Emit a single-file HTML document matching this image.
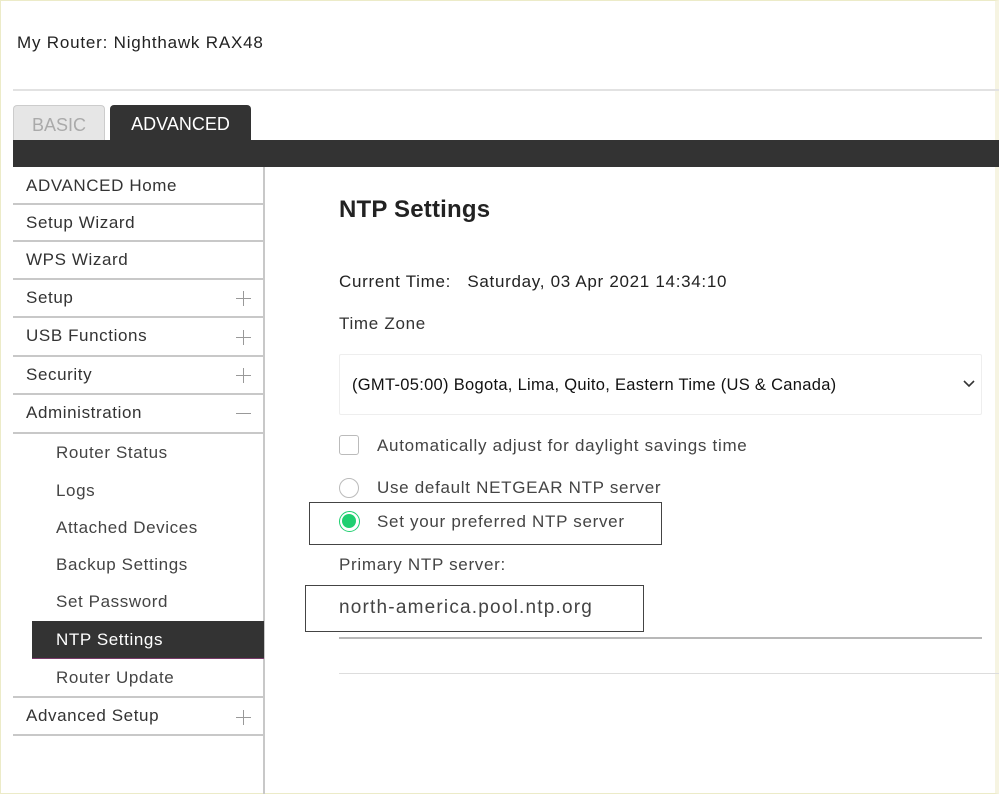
<!DOCTYPE html>
<html><head><style>
*{margin:0;padding:0;box-sizing:border-box}
body{width:999px;height:794px;position:relative;background:#fff;font-family:"Liberation Sans",sans-serif;color:#333;overflow:hidden}
.a{position:absolute;white-space:nowrap}
.frame{position:absolute;left:0;top:0;width:999px;height:794px;border:1px solid #ecebc8;border-right:4px solid #f6f4e2}
.nav{font-size:17px;color:#333;left:26px;letter-spacing:0.6px}
.sub{font-size:17px;color:#444;left:56px;letter-spacing:0.6px}
.sep{position:absolute;left:13px;width:250px;height:2px;background:#c8c8c8}
.plus{position:absolute;left:236px;width:15px;height:15px}
.plus:before{content:"";position:absolute;left:0;top:7px;width:15px;height:1px;background:#999}
.plus.p:after{content:"";position:absolute;left:7px;top:0;width:1px;height:15px;background:#999}
.t{font-size:17px;color:#333;letter-spacing:0.7px}
</style></head><body>
<div class="frame"></div>
<div class="a" style="left:17px;top:33px;font-size:17px;color:#222;letter-spacing:0.8px">My Router: Nighthawk RAX48</div>
<div class="a" style="left:13px;top:89px;width:986px;height:2px;background:#e2e2e2"></div>
<div class="a" style="left:13px;top:105px;width:92px;height:36px;background:#e6e6e6;border:1px solid #ccc;border-bottom:none;border-radius:4px 4px 0 0;color:#aaa;font-size:18px;text-align:center;line-height:38px">BASIC</div>
<div class="a" style="left:110px;top:105px;width:141px;height:36px;background:#333;border-radius:4px 4px 0 0;color:#fff;font-size:18px;text-align:center;line-height:38px">ADVANCED</div>
<div class="a" style="left:13px;top:140px;width:986px;height:27px;background:#333"></div>
<div class="a" style="left:263px;top:167px;width:2px;height:627px;background:#c8c8c8"></div>

<div class="a nav" style="top:176px">ADVANCED Home</div>
<div class="sep" style="top:203px"></div>
<div class="a nav" style="top:213px">Setup Wizard</div>
<div class="sep" style="top:240px"></div>
<div class="a nav" style="top:250px">WPS Wizard</div>
<div class="sep" style="top:278px"></div>
<div class="a nav" style="top:288px">Setup</div><div class="plus p" style="top:291px"></div>
<div class="sep" style="top:316px"></div>
<div class="a nav" style="top:326px">USB Functions</div><div class="plus p" style="top:330px"></div>
<div class="sep" style="top:355px"></div>
<div class="a nav" style="top:365px">Security</div><div class="plus p" style="top:368px"></div>
<div class="sep" style="top:393px"></div>
<div class="a nav" style="top:403px">Administration</div><div class="plus" style="top:406px"></div>
<div class="sep" style="top:432px"></div>
<div class="a sub" style="top:443px">Router Status</div>
<div class="a sub" style="top:481px">Logs</div>
<div class="a sub" style="top:518px">Attached Devices</div>
<div class="a sub" style="top:555px">Backup Settings</div>
<div class="a sub" style="top:592px">Set Password</div>
<div class="a" style="left:32px;top:621px;width:232px;height:38px;background:#333;border-bottom:1px solid #7a3a6a"></div>
<div class="a sub" style="top:630px;color:#fff">NTP Settings</div>
<div class="a sub" style="top:668px">Router Update</div>
<div class="sep" style="top:696px"></div>
<div class="a nav" style="top:706px">Advanced Setup</div><div class="plus p" style="top:710px"></div>
<div class="sep" style="top:734px"></div>

<div class="a" style="left:339px;top:196px;font-size:24px;font-weight:bold;color:#222;letter-spacing:0.2px">NTP Settings</div>
<div class="a t" style="left:339px;top:272px;color:#222">Current Time:&nbsp;&nbsp; Saturday, 03 Apr 2021 14:34:10</div>
<div class="a t" style="left:339px;top:314px">Time Zone</div>
<div class="a" style="left:339px;top:354px;width:643px;height:61px;border:1px solid #eee;border-radius:2px"></div>
<div class="a" style="left:352px;top:376px;font-size:16.5px;color:#111;letter-spacing:0.3px">(GMT-05:00) Bogota, Lima, Quito, Eastern Time (US &amp; Canada)</div>
<svg class="a" style="left:963px;top:380px" width="12" height="8"><path d="M1 1 L6 6 L11 1" fill="none" stroke="#333" stroke-width="1.6"/></svg>
<div class="a" style="left:339px;top:435px;width:20px;height:20px;border:1.5px solid #bbb;border-radius:3px"></div>
<div class="a t" style="left:377px;top:436px;color:#444">Automatically adjust for daylight savings time</div>
<div class="a" style="left:339px;top:478px;width:20px;height:20px;border:1.5px solid #bbb;border-radius:50%"></div>
<div class="a t" style="left:377px;top:478px;color:#444">Use default NETGEAR NTP server</div>
<div class="a" style="left:309px;top:502px;width:353px;height:43px;border:1.5px solid #444"></div>
<div class="a" style="left:339px;top:511px;width:21px;height:21px;border:1.5px solid #1fcf70;border-radius:50%;padding:2px"><div style="width:14px;height:14px;border-radius:50%;background:#1fcf70"></div></div>
<div class="a t" style="left:377px;top:512px;color:#444">Set your preferred NTP server</div>
<div class="a t" style="left:339px;top:555px;color:#444">Primary NTP server:</div>
<div class="a" style="left:305px;top:585px;width:339px;height:47px;border:1.5px solid #444"></div>
<div class="a" style="left:339px;top:597px;font-size:19px;color:#444;letter-spacing:1.2px">north-america.pool.ntp.org</div>
<div class="a" style="left:339px;top:637px;width:643px;height:2px;background:#b8b8b8"></div>
<div class="a" style="left:339px;top:673px;width:660px;height:1px;background:#ddd"></div>
</body></html>
